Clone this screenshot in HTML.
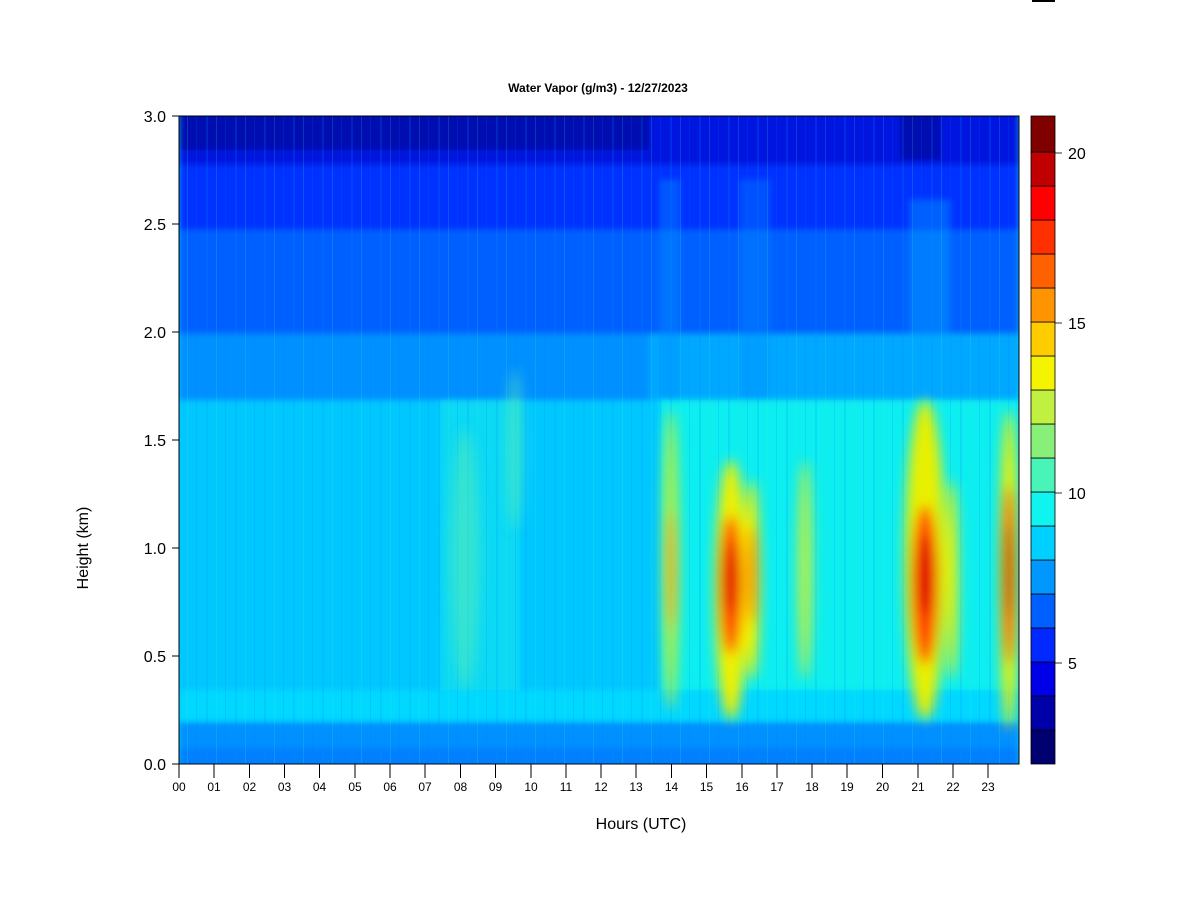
<!DOCTYPE html>
<html><head><meta charset="utf-8"><style>
html,body{margin:0;padding:0;background:#fff;width:1200px;height:900px;overflow:hidden}
svg text{font-family:"Liberation Sans",Arial,sans-serif}
</style></head><body>
<svg width="1200" height="900" xmlns="http://www.w3.org/2000/svg">
<defs>
<clipPath id="c"><rect x="179" y="116" width="840" height="648"/></clipPath>
<filter id="b" x="-50%" y="-50%" width="200%" height="200%"><feGaussianBlur stdDeviation="6"/></filter>
<filter id="b2" x="-50%" y="-50%" width="200%" height="200%"><feGaussianBlur stdDeviation="3"/></filter>
<pattern id="st" width="29" height="10" patternUnits="userSpaceOnUse"><rect width="2" height="10" x="3" fill="#0090ff" opacity=".18"/><rect width="1" height="10" x="13" fill="#40f0d0" opacity=".18"/><rect width="1" height="10" x="22" fill="#0070ff" opacity=".15"/></pattern>
</defs>
<rect x="1032" y="0" width="23" height="2" fill="#000"/>
<text x="598" y="92" font-size="12" font-weight="bold" text-anchor="middle">Water Vapor (g/m3) - 12/27/2023</text>
<g clip-path="url(#c)">
<rect x="179" y="116" width="840" height="648" fill="#00c8ff"/>
<g filter="url(#b2)">
<rect x="660" y="390" width="360" height="340" fill="#10eef0"/>
<rect x="440" y="400" width="80" height="320" fill="#10e0f0" opacity=".7"/>
<rect x="179" y="330" width="840" height="70" fill="#00a8ff"/>
<rect x="179" y="330" width="470" height="70" fill="#0090ff"/>
<rect x="179" y="224" width="840" height="110" fill="#0060ff"/>
<rect x="179" y="110" width="840" height="120" fill="#0030ff"/>
<rect x="179" y="110" width="840" height="55" fill="#0018e0"/>
<rect x="179" y="110" width="470" height="40" fill="#0008b0"/>
<rect x="900" y="110" width="40" height="50" fill="#0008b0"/>
<rect x="660" y="180" width="20" height="220" fill="#0090ff" opacity=".4"/>
<rect x="740" y="180" width="30" height="220" fill="#0090ff" opacity=".35"/>
<rect x="910" y="200" width="40" height="200" fill="#00a8ff" opacity=".4"/>
<rect x="179" y="690" width="840" height="32" fill="#00d8ff"/>
<rect x="179" y="722" width="840" height="50" fill="#0090ff"/>
<rect x="179" y="748" width="840" height="20" fill="#0070ff" opacity=".5"/>
</g>
<rect x="179" y="116" width="840" height="648" fill="url(#st)"/>
<g filter="url(#b)">
<ellipse cx="671" cy="560" rx="8" ry="150" fill="#b0f040"/>
<ellipse cx="671" cy="570" rx="4" ry="60" fill="#ffa000"/>
<ellipse cx="731" cy="590" rx="16" ry="130" fill="#f0f000"/>
<ellipse cx="731" cy="585" rx="11" ry="70" fill="#ff4000"/>
<ellipse cx="731" cy="578" rx="7" ry="35" fill="#e00000"/>
<ellipse cx="752" cy="580" rx="8" ry="100" fill="#f0f000"/>
<ellipse cx="752" cy="575" rx="4" ry="50" fill="#ff6000"/>
<ellipse cx="805" cy="570" rx="7" ry="110" fill="#c0f040"/>
<ellipse cx="925" cy="560" rx="20" ry="160" fill="#e8f000"/>
<ellipse cx="925" cy="585" rx="13" ry="80" fill="#ff4000"/>
<ellipse cx="925" cy="575" rx="8" ry="40" fill="#e00000"/>
<ellipse cx="952" cy="580" rx="6" ry="100" fill="#f0f000"/>
<ellipse cx="1009" cy="570" rx="9" ry="160" fill="#f0f000"/>
<ellipse cx="1009" cy="575" rx="6" ry="90" fill="#ff3000"/>
<ellipse cx="1009" cy="570" rx="4" ry="45" fill="#c00000"/>
<ellipse cx="465" cy="560" rx="14" ry="130" fill="#60f0b0" opacity=".5"/>
<ellipse cx="515" cy="450" rx="8" ry="80" fill="#60f0b0" opacity=".5"/>
</g>
</g>
<rect x="179" y="116" width="840" height="648" fill="none" stroke="#000" stroke-width="1"/>
<g stroke="#000" stroke-width="1">
<line x1="172" y1="764" x2="179" y2="764"/><line x1="172" y1="656" x2="179" y2="656"/>
<line x1="172" y1="548" x2="179" y2="548"/><line x1="172" y1="440" x2="179" y2="440"/>
<line x1="172" y1="332" x2="179" y2="332"/><line x1="172" y1="224" x2="179" y2="224"/>
<line x1="172" y1="116" x2="179" y2="116"/>
</g>
<g font-size="16" text-anchor="end">
<text x="166" y="770">0.0</text><text x="166" y="662">0.5</text><text x="166" y="554">1.0</text>
<text x="166" y="446">1.5</text><text x="166" y="338">2.0</text><text x="166" y="230">2.5</text><text x="166" y="122">3.0</text>
</g>
<text transform="translate(88,548) rotate(-90)" font-size="16" text-anchor="middle">Height (km)</text>
<text x="641" y="829" font-size="16" text-anchor="middle">Hours (UTC)</text>
<g stroke="#000" stroke-width="1">
<line x1="179" y1="764" x2="179" y2="778"/><line x1="214" y1="764" x2="214" y2="778"/><line x1="249.5" y1="764" x2="249.5" y2="778"/><line x1="284.5" y1="764" x2="284.5" y2="778"/><line x1="319.5" y1="764" x2="319.5" y2="778"/><line x1="355" y1="764" x2="355" y2="778"/><line x1="390" y1="764" x2="390" y2="778"/><line x1="425" y1="764" x2="425" y2="778"/><line x1="460.5" y1="764" x2="460.5" y2="778"/><line x1="495.5" y1="764" x2="495.5" y2="778"/><line x1="531" y1="764" x2="531" y2="778"/><line x1="566" y1="764" x2="566" y2="778"/><line x1="601" y1="764" x2="601" y2="778"/><line x1="636" y1="764" x2="636" y2="778"/><line x1="671.5" y1="764" x2="671.5" y2="778"/><line x1="706.5" y1="764" x2="706.5" y2="778"/><line x1="742" y1="764" x2="742" y2="778"/><line x1="777" y1="764" x2="777" y2="778"/><line x1="812" y1="764" x2="812" y2="778"/><line x1="847" y1="764" x2="847" y2="778"/><line x1="882.5" y1="764" x2="882.5" y2="778"/><line x1="918" y1="764" x2="918" y2="778"/><line x1="953" y1="764" x2="953" y2="778"/><line x1="988" y1="764" x2="988" y2="778"/>
</g>
<g font-size="12" text-anchor="middle">
<text x="179" y="791">00</text><text x="214" y="791">01</text><text x="249.5" y="791">02</text><text x="284.5" y="791">03</text><text x="319.5" y="791">04</text><text x="355" y="791">05</text><text x="390" y="791">06</text><text x="425" y="791">07</text><text x="460.5" y="791">08</text><text x="495.5" y="791">09</text><text x="531" y="791">10</text><text x="566" y="791">11</text><text x="601" y="791">12</text><text x="636" y="791">13</text><text x="671.5" y="791">14</text><text x="706.5" y="791">15</text><text x="742" y="791">16</text><text x="777" y="791">17</text><text x="812" y="791">18</text><text x="847" y="791">19</text><text x="882.5" y="791">20</text><text x="918" y="791">21</text><text x="953" y="791">22</text><text x="988" y="791">23</text>
</g>
<g stroke="#000" stroke-width="0.8">
<rect x="1031" y="730" width="24" height="34" fill="#000070"/>
<rect x="1031" y="696" width="24" height="34" fill="#0000a8"/>
<rect x="1031" y="662" width="24" height="34" fill="#0000e8"/>
<rect x="1031" y="628" width="24" height="34" fill="#0028ff"/>
<rect x="1031" y="594" width="24" height="34" fill="#0060ff"/>
<rect x="1031" y="560" width="24" height="34" fill="#0098ff"/>
<rect x="1031" y="526" width="24" height="34" fill="#00d0ff"/>
<rect x="1031" y="492" width="24" height="34" fill="#10f4f0"/>
<rect x="1031" y="458" width="24" height="34" fill="#48f4b8"/>
<rect x="1031" y="424" width="24" height="34" fill="#88f078"/>
<rect x="1031" y="390" width="24" height="34" fill="#c0f040"/>
<rect x="1031" y="356" width="24" height="34" fill="#f4f400"/>
<rect x="1031" y="322" width="24" height="34" fill="#ffcc00"/>
<rect x="1031" y="288" width="24" height="34" fill="#ff9400"/>
<rect x="1031" y="254" width="24" height="34" fill="#ff6000"/>
<rect x="1031" y="220" width="24" height="34" fill="#ff3000"/>
<rect x="1031" y="186" width="24" height="34" fill="#ff0000"/>
<rect x="1031" y="152" width="24" height="34" fill="#c00000"/>
<rect x="1031" y="116" width="24" height="36" fill="#800000"/>
<line x1="1055" y1="663" x2="1062" y2="663"/><line x1="1055" y1="493" x2="1062" y2="493"/>
<line x1="1055" y1="323" x2="1062" y2="323"/><line x1="1055" y1="153" x2="1062" y2="153"/>
</g>
<g font-size="16">
<text x="1068" y="669">5</text><text x="1068" y="499">10</text><text x="1068" y="329">15</text><text x="1068" y="159">20</text>
</g>
</svg>
</body></html>
